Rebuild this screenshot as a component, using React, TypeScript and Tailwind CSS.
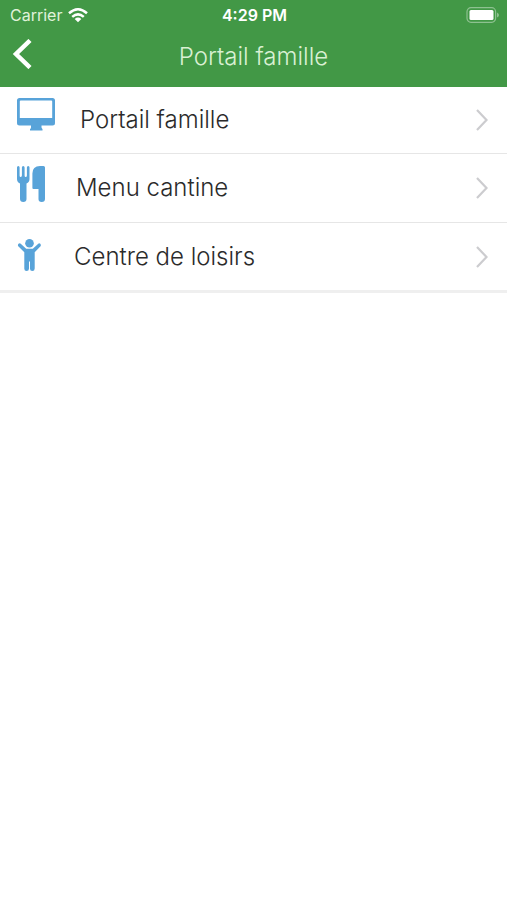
import React from "react";

function MonitorIcon() {
  return (
    <svg width="38" height="33" viewBox="0 0 38 33" fill="#58a3d9" aria-hidden="true">
      <path
        fillRule="evenodd"
        d="M2.5 0H35.5Q38 0 38 2.5V25Q38 27.500 35.500 27.500H24.500V29.500Q25 30.500 25.500 31V32.500H13V31Q14 30.500 14 29.500V27.500H2.500Q0 27.500 0 25V2.500Q0 0 2.500 0ZM2.800 3.500V20H35.200V3.500Q35.200 2.600 34.300 2.600H3.700Q2.800 2.600 2.800 3.500Z"
      />
    </svg>
  );
}

function CutleryIcon() {
  return (
    <svg width="28" height="36" viewBox="0 0 28 36" fill="#58a3d9" aria-hidden="true">
      <path d="M0 1.500Q0 0 1.300 0T2.600 1.500V9.500Q2.600 11 3.600 11T4.900 9.500V1.500Q4.900 0 6.200 0T7.600 1.500V9.500Q7.600 11 8.700 11T9.900 9.500V1.500Q9.900 0 11.200 0T12.500 1.500V13Q12.500 16 9.500 17.500V33Q9.500 36 6.300 36T3 33V17.500Q0 16 0 13Z" />
      <path d="M23 0H26.500Q28 0 28 1.500V33Q28 36 24.700 36T21.500 33V23H16.500Q15.400 23 15.400 21.900V7.500Q15.400 0 23 0Z" />
    </svg>
  );
}

function ChildIcon() {
  return (
    <svg width="24" height="32" viewBox="0 0 24 32" fill="#58a3d9" aria-hidden="true">
      <circle cx="12.500" cy="4.300" r="4.300" />
      <path d="M1.500 4.800Q2.800 3.800 4 4.900L9.200 9.700H15.800L21 4.900Q22.200 3.800 23.300 4.800Q24.400 6.200 23.300 7.400L17.700 13.200V29.500Q17.700 32 15.300 32T13 29.500V22.500H12V29.500Q12 32 9.600 32T7.300 29.500V13.200L1.500 7.400Q.3 6.200 1.500 4.800Z" />
    </svg>
  );
}

function WifiIcon() {
  return (
    <svg width="20" height="15" viewBox="0 0 20 15" fill="none" stroke="white" strokeWidth="2.500" aria-hidden="true">
      <path d="M1 5.300Q10-2.700 19 5.300" />
      <path d="M4.200 8.900Q10 3.900 15.800 8.900" />
      <path d="M6.700 11Q10 8.200 13.300 11L10 14.300Z" fill="white" stroke="none" />
    </svg>
  );
}

function BatteryIcon() {
  return (
    <svg width="33" height="16" viewBox="0 0 33 16" fill="none" aria-hidden="true">
      <rect x="1" y=".7" width="28.600" height="14.600" rx="4" stroke="white" strokeOpacity=".4" strokeWidth="1.200" />
      <rect x="3.500" y="3" width="24" height="10" rx="1.500" fill="white" />
      <path d="M31 5.500Q33 6.500 33 8T31 10.500Z" fill="white" fillOpacity=".4" />
    </svg>
  );
}

function ChevronRight() {
  return (
    <svg width="12" height="22" viewBox="0 0 12 22" fill="none" stroke="#cccccf" strokeWidth="2.200" aria-hidden="true">
      <path d="M1 1L10.500 11L1 21" />
    </svg>
  );
}

const items = [
  { label: "Portail famille", icon: <MonitorIcon />, row: "h-[67px] border-b border-[#e6e6e6]", cell: "w-[63px] pb-3" },
  { label: "Menu cantine", icon: <CutleryIcon />, row: "h-[69px] border-b border-[#e6e6e6]", cell: "w-[59px] pb-2" },
  { label: "Centre de loisirs", icon: <ChildIcon />, row: "h-[70px] border-b-3 border-[#efefef]", cell: "w-[57px] pb-1" },
];

export default function App() {
  return (
    <div className="min-h-screen bg-white font-[Inter,sans-serif]">
      <header className="bg-[#429846] text-white">
        <div className="grid h-[30px] grid-cols-3 items-center pr-2 pl-[10px] text-base">
          <div className="flex items-center gap-[6px] text-[#e0f2da]">
            <span>Carrier</span>
            <WifiIcon />
          </div>
          <time className="text-center font-semibold">4:29 PM</time>
          <div className="flex justify-end">
            <BatteryIcon />
          </div>
        </div>
        <div className="grid h-[57px] grid-cols-[48px_1fr_48px] items-start">
          <button type="button" aria-label="Retour" className="flex h-12 items-center pl-3">
            <svg width="20" height="30" viewBox="0 0 20 30" fill="none" stroke="white" strokeWidth="4.500" aria-hidden="true">
              <path d="M18 1.500L4 15L18 28.500" />
            </svg>
          </button>
          <h1 className="pt-3 text-center text-2xl leading-[30px] font-light text-[#d9f0d3]">Portail famille</h1>
        </div>
      </header>
      <main>
        <ul>
          {items.map((item) => (
            <li key={item.label}>
              <a href="#" className={`flex items-center pr-[19px] pl-[17px] text-[#2b2b2b] ${item.row}`}>
                <span className={`shrink-0 ${item.cell}`}>{item.icon}</span>
                <span className="flex-1 text-2xl font-light">{item.label}</span>
                <ChevronRight />
              </a>
            </li>
          ))}
        </ul>
      </main>
    </div>
  );
}
